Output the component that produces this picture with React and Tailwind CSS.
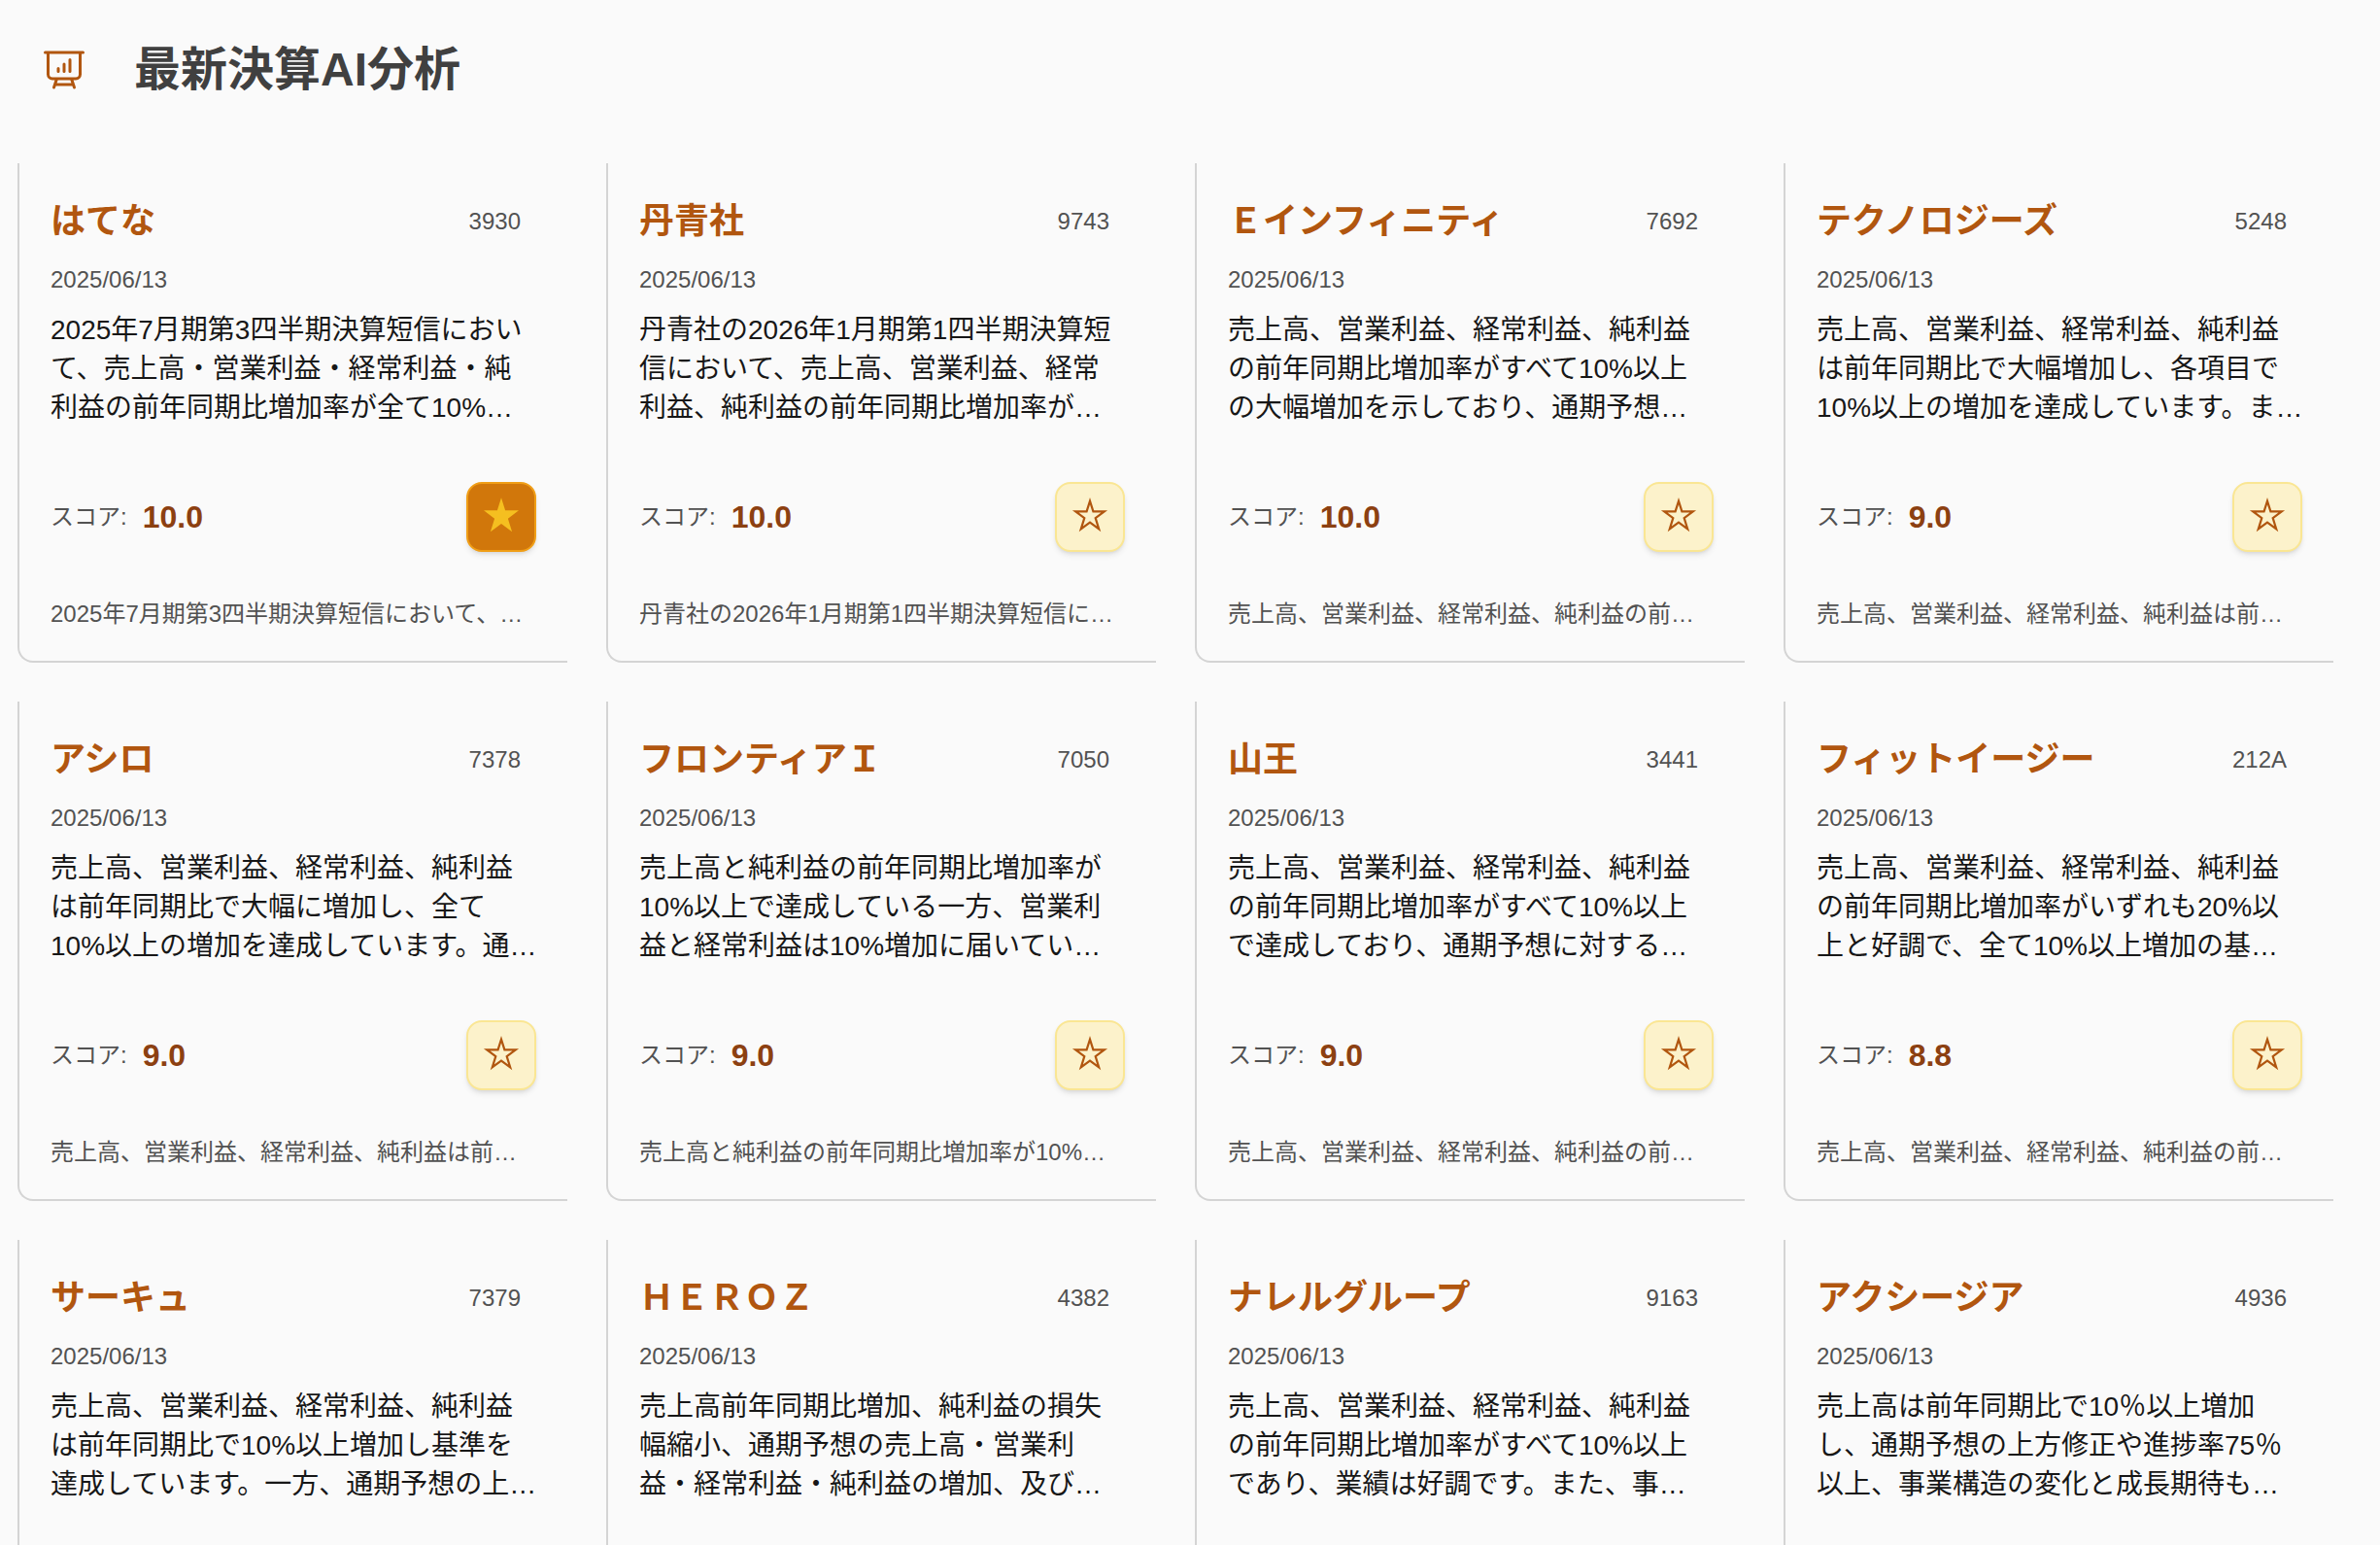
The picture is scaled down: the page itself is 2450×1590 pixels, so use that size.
import React, { useState } from 'react';
import { HiOutlinePresentationChartBar } from 'react-icons/hi2';
import clsx from 'clsx';

const REPORTS = [
  {
    code: '3930',
    name: 'はてな',
    score: '10.0',
    summary: '2025年7月期第3四半期決算短信におい\nて、売上高・営業利益・経常利益・純\n利益の前年同期比増加率が全て10%…',
    note: '2025年7月期第3四半期決算短信において、…',
  },
  {
    code: '9743',
    name: '丹青社',
    score: '10.0',
    summary: '丹青社の2026年1月期第1四半期決算短\n信において、売上高、営業利益、経常\n利益、純利益の前年同期比増加率が…',
    note: '丹青社の2026年1月期第1四半期決算短信に…',
  },
  {
    code: '7692',
    name: 'Ｅインフィニティ',
    score: '10.0',
    summary: '売上高、営業利益、経常利益、純利益\nの前年同期比増加率がすべて10%以上\nの大幅増加を示しており、通期予想…',
    note: '売上高、営業利益、経常利益、純利益の前…',
  },
  {
    code: '5248',
    name: 'テクノロジーズ',
    score: '9.0',
    summary: '売上高、営業利益、経常利益、純利益\nは前年同期比で大幅増加し、各項目で\n10%以上の増加を達成しています。ま…',
    note: '売上高、営業利益、経常利益、純利益は前…',
  },
  {
    code: '7378',
    name: 'アシロ',
    score: '9.0',
    summary: '売上高、営業利益、経常利益、純利益\nは前年同期比で大幅に増加し、全て\n10%以上の増加を達成しています。通…',
    note: '売上高、営業利益、経常利益、純利益は前…',
  },
  {
    code: '7050',
    name: 'フロンティアＩ',
    score: '9.0',
    summary: '売上高と純利益の前年同期比増加率が\n10%以上で達成している一方、営業利\n益と経常利益は10%増加に届いてい…',
    note: '売上高と純利益の前年同期比増加率が10%…',
  },
  {
    code: '3441',
    name: '山王',
    score: '9.0',
    summary: '売上高、営業利益、経常利益、純利益\nの前年同期比増加率がすべて10%以上\nで達成しており、通期予想に対する…',
    note: '売上高、営業利益、経常利益、純利益の前…',
  },
  {
    code: '212A',
    name: 'フィットイージー',
    score: '8.8',
    summary: '売上高、営業利益、経常利益、純利益\nの前年同期比増加率がいずれも20%以\n上と好調で、全て10%以上増加の基…',
    note: '売上高、営業利益、経常利益、純利益の前…',
  },
  {
    code: '7379',
    name: 'サーキュ',
    score: '8.5',
    summary: '売上高、営業利益、経常利益、純利益\nは前年同期比で10%以上増加し基準を\n達成しています。一方、通期予想の上…',
    note: '売上高、営業利益、経常利益、純利益は前…',
  },
  {
    code: '4382',
    name: 'ＨＥＲＯＺ',
    score: '8.5',
    summary: '売上高前年同期比増加、純利益の損失\n幅縮小、通期予想の売上高・営業利\n益・経常利益・純利益の増加、及び…',
    note: '売上高前年同期比増加、純利益の損失幅縮…',
  },
  {
    code: '9163',
    name: 'ナレルグループ',
    score: '8.5',
    summary: '売上高、営業利益、経常利益、純利益\nの前年同期比増加率がすべて10%以上\nであり、業績は好調です。また、事…',
    note: '売上高、営業利益、経常利益、純利益の前…',
  },
  {
    code: '4936',
    name: 'アクシージア',
    score: '8.5',
    summary: '売上高は前年同期比で10％以上増加\nし、通期予想の上方修正や進捗率75％\n以上、事業構造の変化と成長期待も…',
    note: '売上高は前年同期比で10％以上増加し、通…',
  },
];

const StarIcon = ({ filled }) => (
  <svg viewBox="0 0 40 40" className="w-10 h-10" aria-hidden="true">
    {filled ? (
      <path
        fill="currentColor"
        d="M20 0.3 24.1 13.3H38L26.9 21.7 31.1 35.2 20 27.1 8.9 35.2 13.1 21.7 2 13.3H15.9Z"
      />
    ) : (
      <path
        fill="none"
        stroke="currentColor"
        strokeWidth="2.2"
        strokeMiterlimit="10"
        d="M20 3.7 23.4 14.4H34.8L25.7 21.2 29.2 32.3 20 25.6 10.8 32.3 14.3 21.2 5.2 14.4H16.6Z"
      />
    )}
  </svg>
);

const FavoriteButton = ({ active, onClick }) => (
  <button
    type="button"
    aria-label="お気に入り"
    aria-pressed={active}
    onClick={onClick}
    className={clsx(
      'flex items-center justify-center w-18 h-18 rounded-2xl border-2 shadow-md transition-colors',
      active
        ? 'bg-[#d1770b] border-[#f09e16] text-[#f5bf20]'
        : 'bg-[#fcf2cb] border-[#fae693] text-[#b1560f]'
    )}
  >
    <StarIcon filled={active} />
  </button>
);

const ReportCard = ({ report, favorite, onToggle }) => (
  <article className="min-w-0 p-8 border-l-2 border-b-2 border-neutral-300 rounded-bl-2xl">
    <div className="flex items-center justify-between pr-4">
      <h2 className="text-4xl leading-14 font-bold text-[#b1560f]">{report.name}</h2>
      <span className="text-2xl text-neutral-600">{report.code}</span>
    </div>
    <time dateTime="2025-06-13" className="block mt-4 text-2xl text-neutral-600">
      2025/06/13
    </time>
    <p className="mt-4 -mr-2 text-[28px] leading-10 whitespace-pre-line text-neutral-900">
      {report.summary}
    </p>

    <div className="flex items-center justify-between mt-14">
      <div className="flex items-center gap-4">
        <span className="text-2xl text-neutral-600">スコア:</span>
        <span className="text-[32px] leading-10 font-bold text-[#8c4011]">{report.score}</span>
      </div>
      <FavoriteButton active={favorite} onClick={onToggle} />
    </div>

    <p className="mt-12 text-2xl whitespace-nowrap text-neutral-600">{report.note}</p>
  </article>
);

const App = () => {
  const [favorites, setFavorites] = useState(['3930']);

  const toggle = (code) => {
    setFavorites((prev) =>
      prev.includes(code) ? prev.filter((c) => c !== code) : [...prev, code]
    );
  };

  return (
    <main
      lang="ja"
      className="h-screen overflow-hidden bg-neutral-50 pl-[18px] pr-12 font-['Liberation_Sans','Noto_Sans_CJK_JP',sans-serif]"
    >
      <header className="flex items-center gap-12 pl-6 pt-12 pb-18">
        <HiOutlinePresentationChartBar className="w-12 h-12 text-[#b1560f]" />
        <h1 className="text-5xl font-bold text-neutral-700">最新決算AI分析</h1>
      </header>

      <section className="grid grid-cols-4 gap-10">
        {REPORTS.map((report) => (
          <ReportCard
            key={report.code}
            report={report}
            favorite={favorites.includes(report.code)}
            onToggle={() => toggle(report.code)}
          />
        ))}
      </section>
    </main>
  );
};

export default App;
